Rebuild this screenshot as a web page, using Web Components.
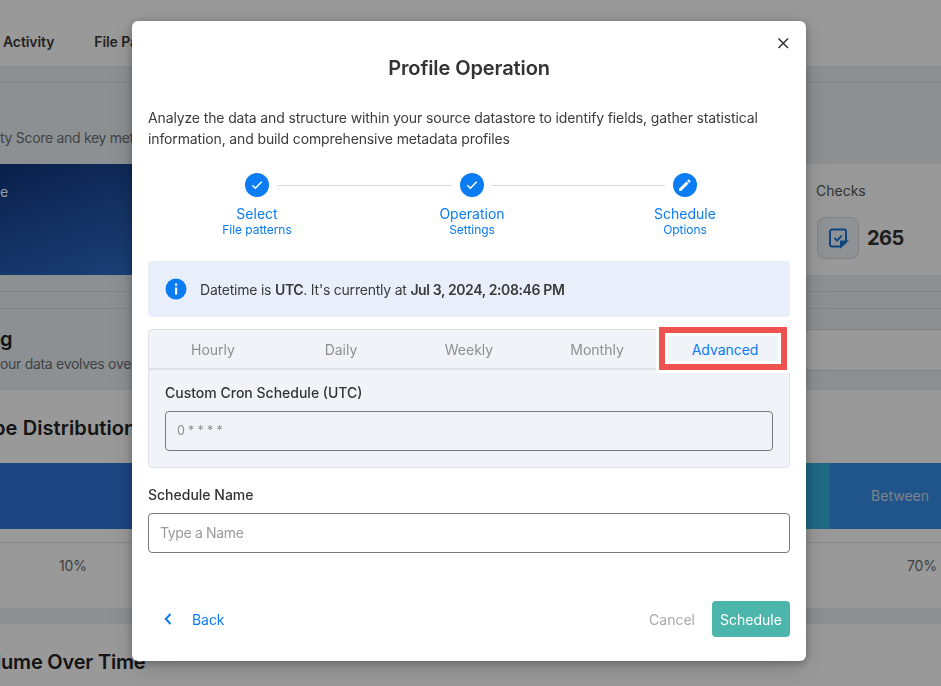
<!DOCTYPE html>
<html lang="en">
<head>
<meta charset="utf-8">
<title>Profile Operation</title>
<style>
  html, body { margin: 0; height: 100%; overflow: hidden; }
  body { font-family: Inter, "Liberation Sans", sans-serif; }
</style>
</head>
<body>
<bg-page></bg-page>
<profile-dialog>
  <step-item slot="steps" label="Select" sub="File patterns" icon="check"></step-item>
  <step-item slot="steps" label="Operation" sub="Settings" icon="check" connector="20"></step-item>
  <step-item slot="steps" label="Schedule" sub="Options" icon="edit" connector="17"></step-item>
  <info-alert slot="alert">Datetime is <b>UTC</b>. It's currently at <b>Jul 3, 2024, 2:08:46 PM</b></info-alert>
  <schedule-tabs slot="tabs"></schedule-tabs>
  <text-field slot="name" label="Schedule Name" placeholder="Type a Name"></text-field>
</profile-dialog>

<script>
// 모달 뒤에 깔리는 페이지 (스크림으로 어두워짐)
class BgPage extends HTMLElement {
  constructor() {
    super();
    this.attachShadow({ mode: "open" });
  }

  connectedCallback() {
    this.shadowRoot.innerHTML = `
      <style>
        :host {
          display: block;
          height: 686px;
          overflow: hidden;
          background: #ffffff;
          color: #222831;
          font-size: 14px;
        }
        .nav { height: 66px; display: flex; align-items: center; font-weight: 600; color: #3a3a3a; padding: 16px 0 0 3px; gap: 40px; box-sizing: border-box; letter-spacing: -0.1px; }
        .tint { background: #eaf0f5; }
        .rule { height: 16px; border-bottom: 1px solid #d8dde1; }
        .intro { height: 81px; color: #6b7075; padding-top: 46px; box-sizing: border-box; line-height: 18px; letter-spacing: -0.3px; }
        .hero { height: 111px; display: flex; background: #ffffff; }
        .banner {
          width: 140px;
          background: linear-gradient(160deg, #11357d, #2f6cc8);
          color: #ffffff;
          padding-top: 19px;
          box-sizing: border-box;
          line-height: 17px;
        }
        .checks { margin-left: auto; width: 125px; padding-top: 18px; box-sizing: border-box; color: #555; line-height: 18px; }
        .stat { display: flex; align-items: center; gap: 8px; margin-top: 17px; margin-left: 1px; font-size: 20px; font-weight: 700; color: #333; letter-spacing: -0.5px; }
        .stat-icon {
          width: 40px; height: 40px; border: 1px solid #d4dbe2; border-radius: 8px; background: #eef3f8;
          display: flex; align-items: center; justify-content: center;
        }
        .header-row { height: 81px; display: flex; }
        .header-left { width: 300px; padding-top: 19px; box-sizing: border-box; background: #eaf0f5; }
        .header-left h2 { margin: 0; font-size: 20px; line-height: 22px; font-weight: 600; color: #222; }
        .header-left p { margin: 5px 0 0; line-height: 18px; color: #6b7075; letter-spacing: -0.3px; }
        .header-right { flex: 1; display: flex; flex-direction: column; }
        .header-right .top { height: 20px; background: #eaf0f5; border-bottom: 1px solid #d8dde1; }
        .header-right .mid { height: 40px; background: #fff; border-bottom: 1px solid #d8dde1; }
        .header-right .bot { flex: 1; background: #eaf0f5; }
        .dist { height: 218px; background: #fff; padding-top: 26px; box-sizing: border-box; }
        .dist h2 { margin: 0 0 0 -7px; font-size: 20px; line-height: 24px; font-weight: 600; color: #222; letter-spacing: 0.1px; }
        .bar { display: flex; height: 66px; margin-top: 23px; }
        .bar .a { flex: 1; background: #3275da; }
        .bar .b { width: 24px; background: #34b1df; border-right: 1px solid #4d9ee6; box-sizing: border-box; }
        .bar .c { width: 111px; background: #358ee8; color: #cfd9e4; display: flex; align-items: center; justify-content: flex-end; padding: 0 12px 2px 0; box-sizing: border-box; }
        .axis { display: flex; justify-content: space-between; padding: 14px 4px 0 59px; margin-top: 13px; border-top: 1px solid #e4e4e4; color: #6b6b6b; line-height: 18px; letter-spacing: -0.1px; }
        .sep { height: 16px; background: #eaf0f5; }
        .vol { background: #fff; height: 62px; padding-top: 27px; box-sizing: border-box; }
        .vol h2 { margin: 0 0 0 -4px; font-size: 20px; line-height: 22px; font-weight: 600; color: #222; letter-spacing: -0.2px; }
      </style>
      <div class="nav"><span>Activity</span><span>File Pa</span></div>
      <div class="tint">
        <div class="rule"></div>
        <div class="intro">ty Score and key met</div>
      </div>
      <div class="hero">
        <div class="banner">e</div>
        <div class="checks">
          Checks
          <div class="stat">
            <span class="stat-icon">
              <svg width="22" height="22" viewBox="0 0 22 22" fill="none" stroke="#1976d2" stroke-width="2">
                <path d="M5 2.5h12a2 2 0 0 1 2 2v10l-5 5H5a2 2 0 0 1-2-2v-13a2 2 0 0 1 2-2z"/>
                <path d="M7.5 11l2.6 2.6 4.6-5"/>
                <path d="M14 19.5v-5h5.5z" fill="#1976d2"/>
              </svg>
            </span>
            265
          </div>
        </div>
      </div>
      <div class="tint">
        <div class="rule"></div>
        <div class="rule"></div>
      </div>
      <div class="header-row">
        <div class="header-left">
          <h2>g</h2>
          <p>our data evolves over</p>
        </div>
        <div class="header-right">
          <div class="top"></div>
          <div class="mid"></div>
          <div class="bot"></div>
        </div>
      </div>
      <div class="dist">
        <h2>pe Distribution</h2>
        <div class="bar"><span class="a"></span><span class="b"></span><span class="c">Between</span></div>
        <div class="axis"><span>10%</span><span>70%</span></div>
      </div>
      <div class="sep"></div>
      <div class="vol"><h2>lume Over Time</h2></div>
    `;
  }
}

// 스테퍼 항목
class StepItem extends HTMLElement {
  constructor() {
    super();
    this.attachShadow({ mode: "open" });
  }

  connectedCallback() {
    const icons = {
      check: `<path d="M7.300 12.200l3.100 3.100 6.300-6.500" fill="none" stroke="#fff" stroke-width="1.500"/>`,
      edit: `<path d="M6 15.800V18h2.200l7.400-7.400-2.200-2.200L6 15.800zM17.400 8.800a.6.6 0 0 0 0-.8L16 6.600a.6.6 0 0 0-.8 0l-1.100 1.100 2.200 2.200 1.100-1.100z" fill="#fff"/>`
    };
    const icon = icons[this.getAttribute("icon")];
    const gap = this.getAttribute("connector");
    this.shadowRoot.innerHTML = `
      <style>
        :host { display: flex; flex-direction: column; align-items: center; position: relative; color: #0b7cf1; }
        .line {
          position: absolute;
          top: 12px;
          left: calc(-50% + ${gap}px);
          right: calc(50% + 20px);
          border-top: 1px solid #dcdcdc;
        }
        .dot { width: 24px; height: 24px; border-radius: 50%; background: #0b7cf1; display: block; }
        .label { margin-top: 8px; font-size: 14px; line-height: 18px; }
        .sub { font-size: 12px; line-height: 14px; margin-top: 0; letter-spacing: -0.05px; }
      </style>
      ${gap ? '<span class="line"></span>' : ""}
      <svg class="dot" viewBox="0 0 24 24">${icon}</svg>
      <span class="label">${this.getAttribute("label")}</span>
      <span class="sub">${this.getAttribute("sub")}</span>
    `;
  }
}

// 안내 알림 상자
class InfoAlert extends HTMLElement {
  constructor() {
    super();
    this.attachShadow({ mode: "open" });
  }

  connectedCallback() {
    this.shadowRoot.innerHTML = `
      <style>
        :host {
          display: flex;
          align-items: center;
          gap: 13px;
          height: 56px;
          padding: 0 0 0 17px;
          box-sizing: border-box;
          background: #e8eefa;
          border-radius: 4px;
          font-size: 14px;
          letter-spacing: -0.22px;
          color: #3b3b3b;
        }
        svg { flex: none; }
        ::slotted(b) { font-weight: 600; letter-spacing: -0.38px; }
      </style>
      <svg width="22" height="22" viewBox="0 0 22 22">
        <circle cx="11" cy="11" r="10.500" fill="#0b7cf1"/>
        <rect x="10" y="5.500" width="2.200" height="2.300" fill="#fff"/>
        <rect x="10" y="9.500" width="2.200" height="7" fill="#fff"/>
      </svg>
      <span><slot></slot></span>
    `;
  }
}

// 주기 탭 + 크론 입력
class ScheduleTabs extends HTMLElement {
  constructor() {
    super();
    this.attachShadow({ mode: "open" });
  }

  connectedCallback() {
    this.shadowRoot.innerHTML = `
      <style>
        :host {
          display: block;
          background: #f0f4f9;
          border: 1px solid #dfe3e8;
          border-radius: 4px;
          height: 139px;
          box-sizing: border-box;
          font-size: 14px;
        }
        .tabs { display: grid; grid-template-columns: repeat(5, 128px); height: 40px; box-sizing: border-box; border-bottom: 2px solid #dde1e7; }
        .tab { display: flex; align-items: center; justify-content: center; color: #8f8f8f; }
        .tab.active { position: relative; color: #0b7cf1; z-index: 0; letter-spacing: -0.05px; }
        /* 스크린샷 위 빨간 강조 표시 */
        .mark {
          position: absolute;
          z-index: -1;
          left: -5px; right: -1px; top: -3px; bottom: -5px;
          background: #fff;
          padding: 0 3px 3px;
          box-sizing: border-box;
        }
        .mark i {
          display: block;
          height: 100%;
          box-sizing: border-box;
          border: 6px solid #ef5350;
          background: #fff;
          padding: 3px;
        }
        .mark i::after { content: ""; display: block; height: 100%; background: #f0f4f9; }
        .body { padding: 14px 16px 0; }
        .cron-label { line-height: 18px; font-weight: 500; color: #333; }
        .cron {
          margin-top: 9px;
          height: 40px;
          box-sizing: border-box;
          display: flex;
          align-items: center;
          padding: 0 11px 1px;
          border: 1px solid #7a7a7a;
          border-radius: 4px;
          color: #8f8f8f;
          font-size: 12.500px;
          letter-spacing: -0.15px;
        }
      </style>
      <div class="tabs">
        <span class="tab">Hourly</span>
        <span class="tab">Daily</span>
        <span class="tab">Weekly</span>
        <span class="tab">Monthly</span>
        <span class="tab active"><span class="mark"><i></i></span>Advanced</span>
      </div>
      <div class="body">
        <div class="cron-label">Custom Cron Schedule (UTC)</div>
        <div class="cron">0 * * * *</div>
      </div>
    `;
  }
}

// 라벨이 있는 입력 필드
class TextField extends HTMLElement {
  constructor() {
    super();
    this.attachShadow({ mode: "open" });
  }

  connectedCallback() {
    this.shadowRoot.innerHTML = `
      <style>
        :host { display: block; font-size: 14px; }
        label { display: block; line-height: 18px; font-weight: 500; color: #333; }
        .box {
          margin-top: 9px;
          height: 40px;
          box-sizing: border-box;
          display: flex;
          align-items: center;
          padding: 0 11px 1px;
          border: 1px solid #7a7a7a;
          border-radius: 4px;
          color: #9a9a9a;
          letter-spacing: -0.35px;
        }
      </style>
      <label>${this.getAttribute("label")}</label>
      <div class="box">${this.getAttribute("placeholder")}</div>
    `;
  }
}

// 프로파일 작업 모달
class ProfileDialog extends HTMLElement {
  constructor() {
    super();
    this.attachShadow({ mode: "open" });
  }

  connectedCallback() {
    this.shadowRoot.innerHTML = `
      <style>
        :host {
          position: fixed;
          inset: 0;
          display: flex;
          align-items: flex-start;
          padding: 21px 0 0 132px;
          box-sizing: border-box;
          background: rgba(0, 0, 0, 0.4);
        }
        .dialog {
          position: relative;
          width: 674px;
          height: 640px;
          box-sizing: border-box;
          padding: 0 16px;
          background: #fff;
          border-radius: 6px;
          box-shadow: 0 2px 8px rgba(0, 0, 0, 0.3), 0 8px 30px rgba(0, 0, 0, 0.14);
          display: flex;
          flex-direction: column;
          color: #333;
          font-size: 14px;
        }
        .close { position: absolute; top: 15px; right: 16px; width: 14px; height: 14px; }
        h1 { margin: 34px 0 0; text-align: center; font-size: 20px; line-height: 26px; font-weight: 600; color: #333; letter-spacing: -0.1px; }
        .desc { margin: 26px 0 0; line-height: 21px; color: #3b3b3b; letter-spacing: -0.13px; }
        .steps { display: grid; grid-template-columns: 215px 215px 211px; margin: 24px 0 0 1.500px; }
        .alert { margin-top: 24px; }
        .tabs { margin-top: 12px; }
        .name { margin-top: 18px; }
        .footer { margin-top: 48px; display: flex; align-items: center; height: 36px; }
        .back { display: flex; align-items: center; color: #0b7cf1; margin-left: 16px; gap: 20px; letter-spacing: -0.05px; }
        .cancel { margin-left: auto; color: #a9a9a9; }
        .primary {
          margin-left: 17px;
          width: 78px;
          height: 36px;
          border-radius: 4px;
          background: #4db6ac;
          color: #fff;
          display: flex;
          align-items: center;
          justify-content: center;
        }
      </style>
      <div class="dialog">
        <svg class="close" viewBox="0 0 14 14" fill="none" stroke="#333" stroke-width="1.500"><path d="M2.500 2.500l9.500 9.500M12 2.500l-9.500 9.500"/></svg>
        <h1>Profile Operation</h1>
        <p class="desc">Analyze the data and structure within your source datastore to identify fields, gather statistical information, and build comprehensive metadata profiles</p>
        <div class="steps"><slot name="steps"></slot></div>
        <div class="alert"><slot name="alert"></slot></div>
        <div class="tabs"><slot name="tabs"></slot></div>
        <div class="name"><slot name="name"></slot></div>
        <div class="footer">
          <span class="back">
            <svg width="8" height="12" viewBox="0 0 8 12" fill="none" stroke="#0b7cf1" stroke-width="2"><path d="M6.500 1L1.800 6l4.700 5"/></svg>
            Back
          </span>
          <span class="cancel">Cancel</span>
          <span class="primary">Schedule</span>
        </div>
      </div>
    `;
  }
}

customElements.define("bg-page", BgPage);
customElements.define("step-item", StepItem);
customElements.define("info-alert", InfoAlert);
customElements.define("schedule-tabs", ScheduleTabs);
customElements.define("text-field", TextField);
customElements.define("profile-dialog", ProfileDialog);
</script>
</body>
</html>
